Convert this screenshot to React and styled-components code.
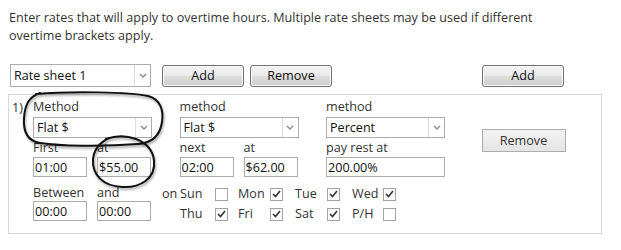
import styled, { createGlobalStyle } from 'styled-components';

const GlobalStyle = createGlobalStyle`
  body {
    margin: 0;
    background: #fff;
    font-family: "Segoe UI", "Open Sans", sans-serif;
    font-size: 12.6px;
    color: #333;
  }
  * { box-sizing: border-box; }
`;

const Page = styled.div`
  position: relative;
  width: 621px;
  height: 250px;
  padding: 9px 0 0 8px;
`;

const Intro = styled.p`
  margin: 0 0 0 1px;
  line-height: 18px;
  color: #333;
`;

const Toolbar = styled.div`
  display: flex;
  align-items: center;
  margin-top: 19px;
  padding-left: 2px;
`;

const SelectBox = styled.div`
  display: flex;
  width: ${p => p.$w || 119}px;
  height: ${p => p.$h || 21}px;
  border: 1px solid #acacac;
  background: #fff;
  color: #111;
`;

const SelectText = styled.span`
  flex: 1;
  padding-left: 3px;
  line-height: ${p => (p.$h || 21) - 2}px;
  white-space: nowrap;
`;

const Arrow = styled.span`
  width: 16px;
  border-left: 1px solid #dcdcdc;
  display: flex;
  align-items: center;
  justify-content: center;
`;

const Button = styled.button`
  width: 82px;
  height: 22px;
  margin-left: ${p => p.$ml || 0}px;
  padding: 0;
  font: inherit;
  color: #111;
  border: 1px solid #707070;
  border-radius: 3px;
  background: linear-gradient(#f3f3f3 0%, #ebebeb 48%, #dddddd 52%, #cfcfcf 100%);
  box-shadow: inset 0 0 0 1px #fcfcfc;
`;

const FlatButton = styled.button`
  width: 84px;
  height: 23px;
  margin: 30px 0 0 9px;
  padding: 0;
  font: inherit;
  color: #333;
  border: 1px solid #adadad;
  background: linear-gradient(#f2f2f2, #e4e4e4);
  align-self: start;
  grid-row: 1 / span 2;
  grid-column: 4;
`;

const Panel = styled.div`
  display: flex;
  width: 594px;
  height: 140px;
  margin-top: 7px;
  border: 1px solid #d6d6d6;
  padding: 4px 0 0 3px;
`;

const Num = styled.div`
  width: 21px;
  line-height: 16px;
  padding-top: 1px;
`;

const Body = styled.div`
  display: flex;
  flex-direction: column;
`;

const TopGrid = styled.div`
  display: grid;
  grid-template-columns: 119px 119px 119px auto;
  column-gap: 27.5px;
  row-gap: 2px;
`;

const Field = styled.div`
  display: flex;
  flex-direction: column;
`;

const Label = styled.label`
  line-height: 16px;
  margin-bottom: ${p => p.$gap ?? 1}px;
  white-space: nowrap;
`;

const Pair = styled.div`
  display: flex;
  gap: 10px;
`;

const Input = styled.input`
  width: ${p => p.$w || 54}px;
  height: 20px;
  border: 1px solid #acacac;
  padding: 0 0 0 1px;
  font: inherit;
  color: #111;
  background: #fff;
  outline: none;
`;

const BottomRow = styled.div`
  display: flex;
  align-items: flex-start;
  margin-top: 8px;
`;

const Days = styled.div`
  display: grid;
  grid-template-columns: 18px 35px 23px 32px 25px 32px 25px 31px 13px;
  grid-auto-rows: 20px;
  align-items: center;
  margin: -1px 0 0 11px;
`;

const DayLabel = styled.span`
  white-space: nowrap;
  line-height: 16px;
`;

const Box = styled.span`
  width: 13px;
  height: 13px;
  border: 1px solid #a3a3a3;
  background: #fff;
  display: flex;
  align-items: center;
  justify-content: center;
`;

const Overlay = styled.svg`
  position: absolute;
  left: 0;
  top: 0;
  pointer-events: none;
  path {
    fill: none;
    stroke: #111;
    stroke-width: 2;
    stroke-linecap: round;
    filter: drop-shadow(1px 2px 1px rgba(0, 0, 0, 0.35));
  }
`;

const Chevron = () => (
  <svg width="8" height="5" viewBox="0 0 8 5">
    <path d="M1 1 L4 4 L7 1" fill="none" stroke="#8a8a8a" strokeWidth="1.4" />
  </svg>
);

const Select = ({ value, w, h }) => (
  <SelectBox $w={w} $h={h}>
    <SelectText $h={h}>{value}</SelectText>
    <Arrow><Chevron /></Arrow>
  </SelectBox>
);

const Check = ({ on }) => (
  <Box>
    {on && (
      <svg width="9" height="8" viewBox="0 0 9 8">
        <path d="M1 4 L3.5 6.5 L8 1" fill="none" stroke="#333" strokeWidth="1.6" />
      </svg>
    )}
  </Box>
);

const TextField = ({ label, value, w, gap }) => (
  <Field>
    <Label $gap={gap}>{label}</Label>
    <Input $w={w} readOnly defaultValue={value} />
  </Field>
);

const App = () => {
  return (
    <Page>
      <GlobalStyle />
      <Intro>
        Enter rates that will apply to overtime hours. Multiple rate sheets may be used if different
        <br />
        overtime brackets apply.
      </Intro>

      <Toolbar>
        <Select value="Rate sheet 1" w={141} h={23} />
        <Button $ml={11}>Add</Button>
        <Button $ml={6}>Remove</Button>
        <Button $ml={150}>Add</Button>
      </Toolbar>

      <Panel>
        <Num>1)</Num>
        <Body>
          <TopGrid>
            <Field>
              <Label $gap={2}>Method</Label>
              <Select value="Flat $" />
            </Field>
            <Field>
              <Label $gap={2}>method</Label>
              <Select value="Flat $" />
            </Field>
            <Field>
              <Label $gap={2}>method</Label>
              <Select value="Percent" />
            </Field>
            <FlatButton>Remove</FlatButton>

            <Pair>
              <TextField label="First" value="01:00" />
              <TextField label="at" value="$55.00" />
            </Pair>
            <Pair>
              <TextField label="next" value="02:00" />
              <TextField label="at" value="$62.00" />
            </Pair>
            <TextField label="pay rest at" value="200.00%" w={119} />
          </TopGrid>

          <BottomRow>
            <Pair>
              <TextField label="Between" value="00:00" gap={0} />
              <TextField label="and" value="00:00" gap={0} />
            </Pair>
            <Days>
              <DayLabel>on</DayLabel>
              <DayLabel>Sun</DayLabel><Check />
              <DayLabel>Mon</DayLabel><Check on />
              <DayLabel>Tue</DayLabel><Check on />
              <DayLabel>Wed</DayLabel><Check on />
              <span />
              <DayLabel>Thu</DayLabel><Check on />
              <DayLabel>Fri</DayLabel><Check on />
              <DayLabel>Sat</DayLabel><Check on />
              <DayLabel>P/H</DayLabel><Check />
            </Days>
          </BottomRow>
        </Body>
      </Panel>

      <Overlay width="621" height="250" viewBox="0 0 621 250">
        <path d="M36 94 C70 91 130 92 148 96 C160 99 164 110 162 122 C160 136 152 143 138 144 C100 147 60 146 40 143 C28 141 23 132 24 118 C25 104 29 97 40 93" />
        <path d="M106 139 C125 132 151 139 154 160 C156 179 140 188 122 187 C103 186 92 175 93 159 C94 149 99 143 109 138" />
      </Overlay>
    </Page>
  );
};

export default App;
